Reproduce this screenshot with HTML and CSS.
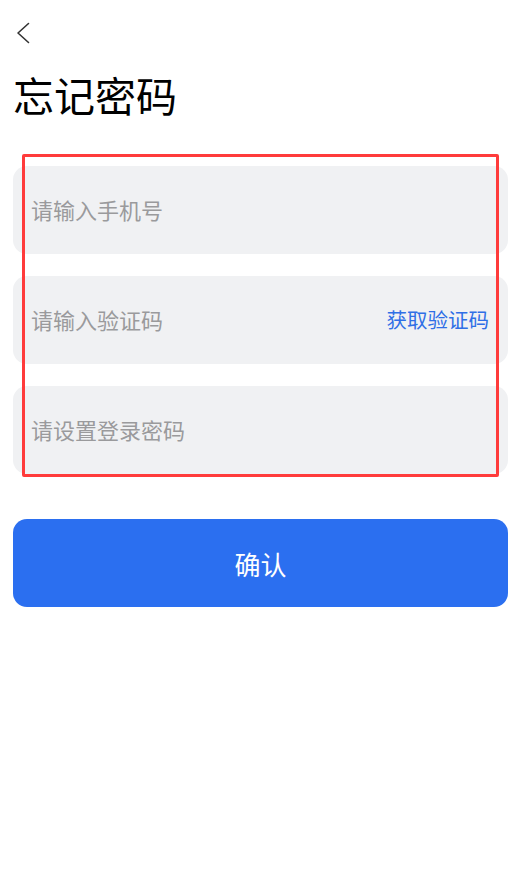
FILE: index.html
```html
<!DOCTYPE html>
<html>
<head>
    <meta charset="utf-8">
    <title>忘记密码</title>
    <link rel="stylesheet" href="styles.css">
</head>
<body>
    <div class="page">
        <div class="nav">
            <svg class="back" width="14" height="24" viewBox="0 0 14 24">
                <path d="M12.5 2.5 L2 12 L12.5 21.5" fill="none" stroke="#333" stroke-width="1.6" stroke-linecap="round" stroke-linejoin="round"/>
            </svg>
        </div>
        <h1 class="title">忘记密码</h1>

        <form class="form">
            <div class="field">
                <input type="text" placeholder="请输入手机号">
            </div>
            <div class="field">
                <input type="text" placeholder="请输入验证码">
                <span class="code-link">获取验证码</span>
            </div>
            <div class="field">
                <input type="password" placeholder="请设置登录密码">
            </div>
            <!-- annotation box drawn over the fields -->
            <div class="mark"></div>
        </form>

        <button type="button" class="submit">确认</button>
    </div>
</body>
</html>
```

FILE: styles.css
```css
body {
    margin: 0;
    background: #fff;
    font-family: "Noto Sans CJK SC", "Noto Sans", sans-serif;
}
.page {
    width: 495px;
    margin-left: 13px;
}
.nav {
    height: 66px;
    display: flex;
    align-items: center;
}
.back {
    display: block;
    margin-left: 3px;
}
.title {
    margin: 0;
    font-size: 41px;
    line-height: 56px;
    font-weight: normal;
    color: #000;
}
.form {
    position: relative;
    margin-top: 44px;
    display: flex;
    flex-direction: column;
    gap: 22px;
}
.field {
    height: 88px;
    background: #f0f1f3;
    border-radius: 14px;
    display: flex;
    align-items: center;
    padding: 0 19px 0 18px;
}
.field input {
    flex: 1;
    min-width: 0;
    border: 0;
    outline: 0;
    background: transparent;
    padding: 0 0 2px;
    font-family: inherit;
    font-size: 22px;
    color: #333;
}
.field input::placeholder {
    color: #9a9a9c;
}
.code-link {
    font-size: 20.5px;
    color: #2f6fe6;
    padding-bottom: 2px;
}
.mark {
    position: absolute;
    top: -12px;
    left: 9px;
    width: 477px;
    height: 323px;
    box-sizing: border-box;
    border: 3px solid #ff3b3b;
    border-radius: 2px;
    pointer-events: none;
}
.submit {
    display: block;
    width: 100%;
    height: 88px;
    margin-top: 45px;
    border: 0;
    border-radius: 14px;
    background: #2b6ff0;
    color: #fff;
    font-family: inherit;
    font-size: 26px;
    cursor: pointer;
}
```
